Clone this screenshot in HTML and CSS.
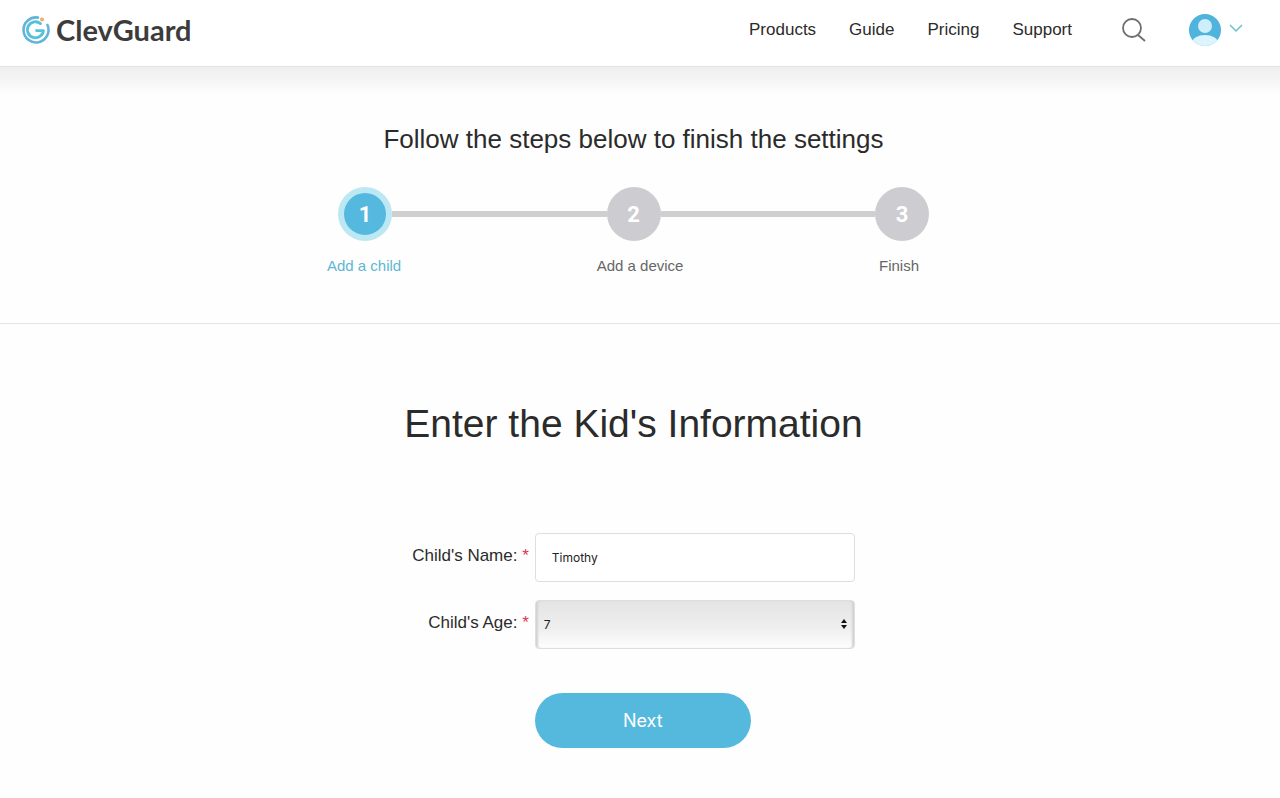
FILE: index.html
```html
<!DOCTYPE html>
<html lang="en">
<head>
  <meta charset="UTF-8" />
  <meta name="viewport" content="width=device-width, initial-scale=1.0"/>
  <title>ClevGuard - Add a child</title>
  <link rel="stylesheet" href="styles.css">
</head>
<body>

  <header class="header">
    <a class="logo" href="#">
      <svg width="30" height="30" viewBox="0 0 30 30" fill="none" aria-hidden="true">
        <path d="M17 2.6A12.5 12.5 0 1 0 26.5 10" stroke="#62b5d8" stroke-width="2.6" stroke-linecap="round"/>
        <path d="M19.5 8.6A8 8 0 1 0 22.4 15.6H15.5" stroke="#55c1dc" stroke-width="2.8" stroke-linecap="round" stroke-linejoin="round"/>
        <circle cx="21" cy="4.5" r="2" fill="#f2a96a"/>
      </svg>
      <span>ClevGuard</span>
    </a>
    <nav class="nav">
      <a href="#">Products</a>
      <a href="#">Guide</a>
      <a href="#">Pricing</a>
      <a href="#">Support</a>
    </nav>
    <button class="icon-btn search" type="button" aria-label="Search">
      <svg width="24" height="24" viewBox="0 0 24 24" fill="none" stroke="#6e6e6e" stroke-width="1.8">
        <circle cx="10" cy="10" r="9"/>
        <path d="M16 17l7 6"/>
      </svg>
    </button>
    <button class="icon-btn account" type="button" aria-label="Account">
      <svg width="32" height="32" viewBox="0 0 32 32">
        <defs>
          <clipPath id="avatar"><circle cx="16" cy="16" r="16"/></clipPath>
        </defs>
        <g clip-path="url(#avatar)">
          <rect width="32" height="32" fill="#4fb3dc"/>
          <ellipse cx="16" cy="29" rx="13" ry="8" fill="#dbf4fd"/>
          <circle cx="16" cy="12" r="7" fill="#cdeefa"/>
        </g>
      </svg>
      <svg width="14" height="12" viewBox="0 0 14 12" fill="none" stroke="#6dbfd2" stroke-width="1.5">
        <path d="M1 1l6 6 6-6"/>
      </svg>
    </button>
  </header>

  <section class="steps">
    <h2>Follow the steps below to finish the settings</h2>
    <div class="track">
      <span class="dot active">1</span>
      <span class="line"></span>
      <span class="dot">2</span>
      <span class="line"></span>
      <span class="dot">3</span>
    </div>
    <div class="step-names">
      <span class="current">Add a child</span>
      <span>Add a device</span>
      <span>Finish</span>
    </div>
  </section>

  <main class="info">
    <h1>Enter the Kid's Information</h1>
    <form class="form" id="childForm">
      <label for="name">Child's Name: <span class="required">*</span></label>
      <input type="text" id="name" name="name" value="Timothy" required>

      <label for="age">Child's Age: <span class="required">*</span></label>
      <div class="select">
        <select id="age" name="age" required>
          <option>5</option>
          <option>6</option>
          <option selected>7</option>
          <option>8</option>
          <option>9</option>
        </select>
        <svg width="6" height="10" viewBox="0 0 6 10" fill="#111" aria-hidden="true">
          <path d="M3 0l3 4H0zM3 10l3-4H0z"/>
        </svg>
      </div>

      <button class="next" type="submit">Next</button>
    </form>
  </main>

</body>
</html>
```
FILE: styles.css
```css
* {
  box-sizing: border-box;
}
body {
  margin: 0;
  font-family: "Liberation Sans", Arial, sans-serif;
  font-size: 17px;
  color: #2b2b2b;
  background-color: #fefefe;
}
a {
  color: inherit;
  text-decoration: none;
}
h1, h2 {
  margin: 0;
  font-weight: normal;
  text-align: center;
}

/* header */
.header {
  display: flex;
  align-items: center;
  height: 67px;
  padding: 0 37px 7px 21px;
  background-color: #fff;
  border-bottom: 1px solid #e4e4e4;
}
.logo {
  display: flex;
  align-items: center;
  gap: 5px;
  margin-right: auto;
  font-family: Lato, sans-serif;
  font-size: 29px;
  font-weight: bold;
  line-height: 32px;
  color: #3c3c3c;
}
.nav {
  display: flex;
  gap: 33px;
}
.icon-btn {
  display: flex;
  align-items: center;
  padding: 0;
  border: none;
  background: none;
  cursor: pointer;
}
.search {
  margin-left: 50px;
}
.account {
  gap: 8px;
  margin-left: 43px;
}

/* steps */
.steps {
  padding: 56px 13px 47px 0;
  border-bottom: 1px solid #e4e4e4;
  background: linear-gradient(#efefef, #f4f4f4 12px, #fefefe 28px);
}
.steps h2 {
  font-size: 26px;
  line-height: 32px;
}
.track {
  display: flex;
  align-items: center;
  max-width: 591px;
  margin: 32px auto 0;
}
.dot {
  display: flex;
  align-items: center;
  justify-content: center;
  width: 54px;
  height: 54px;
  border-radius: 50%;
  background-color: #cdccd1;
  color: #fff;
  font-family: Roboto, sans-serif;
  font-size: 22px;
  font-weight: bold;
}
.dot.active {
  background-color: #55b9df;
  border: 6px solid #bce8f4;
}
.line {
  flex: 1;
  height: 6px;
  background-color: #cfcfcf;
}
.step-names {
  display: flex;
  justify-content: space-between;
  max-width: 613px;
  margin: 15px auto 0;
  padding-right: 21px;
  font-size: 15px;
  line-height: 20px;
  color: #666;
}
.step-names .current {
  color: #5db7d3;
}

/* form */
.info {
  padding: 76px 13px 48px 0;
}
.info h1 {
  font-size: 39px;
  line-height: 48px;
}
.form {
  display: grid;
  grid-template-columns: max-content 320px;
  justify-content: center;
  align-items: center;
  gap: 18px 6px;
  margin-top: 85px;
}
.form label {
  padding-bottom: 3px;
  text-align: right;
}
.required {
  color: #d9364f;
}
.form input, .form select {
  display: block;
  width: 100%;
  height: 49px;
  border: 1px solid #dedede;
  border-radius: 4px;
  background-color: #fff;
  color: #222;
  font-family: Inter, sans-serif;
  font-size: 12px;
}
.form input {
  padding: 0 16px;
}
.select {
  position: relative;
}
.form select {
  appearance: none;
  padding: 0 8px;
  background: linear-gradient(#e4e4e4, #efefef 60%, #fefefe);
  box-shadow: inset 3px 0 2px -1px #d2d2d2, inset -3px 0 2px -1px #d2d2d2;
}
.select svg {
  position: absolute;
  top: 19px;
  right: 8px;
  pointer-events: none;
}
.next {
  grid-column: 2;
  width: 216px;
  height: 55px;
  margin-top: 26px;
  border: none;
  border-radius: 28px;
  background-color: #55b9de;
  color: #fff;
  font-family: Inter, sans-serif;
  font-size: 18px;
  cursor: pointer;
}
```
